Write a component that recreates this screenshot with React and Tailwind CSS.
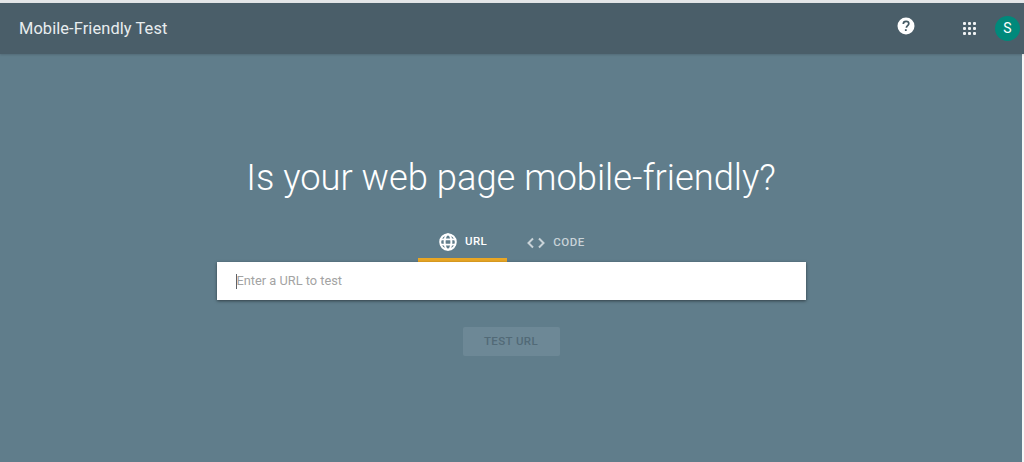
import React from 'react';

function GlobeIcon() {
    return (
        <svg width="18" height="18" viewBox="0 0 24 24" fill="none" stroke="#fff" strokeWidth="2.6">
            <circle cx="12" cy="12" r="10.4" />
            <ellipse cx="12" cy="12" rx="4.5" ry="10.4" />
            <path d="M2 8.5h20M2 15.5h20" />
        </svg>
    );
}

function CodeIcon() {
    return (
        <svg width="18" height="12" viewBox="0 0 18 12" fill="none" stroke="#c9d3d8" strokeWidth="2">
            <path d="M6 1.5 1.5 6 6 10.5M12 1.5 16.5 6 12 10.5" />
        </svg>
    );
}

function HelpIcon() {
    return (
        <svg width="18" height="18" viewBox="0 0 18 18">
            <circle cx="9" cy="9" r="8.5" fill="#fff" />
            <path d="M6.3 7c0-1.6 1.2-2.6 2.8-2.6 1.5 0 2.7 1 2.7 2.3 0 1.9-2.4 2-2.4 4" fill="none" stroke="#455a64" strokeWidth="1.7" />
            <rect x="7.9" y="12.2" width="1.8" height="1.8" fill="#455a64" />
        </svg>
    );
}

function AppsIcon() {
    return (
        <div className="grid grid-cols-3 gap-[2px]">
            {[...Array(9)].map((_, i) => (
                <span key={i} className="w-[3px] h-[3px] bg-[#f1f3f4] rounded-[1px]"></span>
            ))}
        </div>
    );
}

export default function App() {
    return (
        <div className="w-[1024px] h-[462px] overflow-hidden flex flex-col bg-[#f4f6f7] font-['Roboto',sans-serif]">
            <div className="h-[3px] bg-[#e4e6e8]"></div>
            <header className="h-[51px] shrink-0 bg-[#4a5e69] flex items-center pl-[19px] shadow-[0_1px_2px_rgba(0,0,0,0.15)] z-10">
                <span className="pt-[2px] text-[16.4px] text-[#e8edef] tracking-[0.1px]">Mobile-Friendly Test</span>
                <div className="ml-auto flex items-center pr-[4px]">
                    <span className="-mt-[5px]"><HelpIcon /></span>
                    <span className="ml-[48px]"><AppsIcon /></span>
                    <span className="ml-[19px] w-[25px] h-[25px] rounded-full bg-[#00897b] text-white text-[14px] flex items-center justify-center">S</span>
                </div>
            </header>
            <main className="w-[1022px] flex-1 bg-[#607d8b] flex flex-col items-center">
                <h1 className="mt-[101px] h-[46px] text-[36.35px] leading-[46px] font-light text-white">Is your web page mobile-friendly?</h1>
                <div className="mt-[23px] w-[589px] flex flex-col items-center">
                    <div className="flex h-[38px] ml-[-1px]">
                        <div className="w-[89px] border-b-[4px] border-[#eaa724] flex items-center justify-center gap-[8px] pt-[2px] pl-[1px]">
                            <GlobeIcon />
                            <span className="text-[11.5px] font-medium text-white tracking-[0.3px]">URL</span>
                        </div>
                        <div className="w-[96px] flex items-center justify-center gap-[8px] pl-[2px]">
                            <CodeIcon />
                            <span className="text-[11.5px] font-medium text-[#c9d3d8] tracking-[0.5px]">CODE</span>
                        </div>
                    </div>
                    <div className="w-[589px] h-[38px] bg-white shadow-[0_1px_3px_rgba(0,0,0,0.5)] flex items-center pl-[19px]">
                        <span className="w-px h-[15px] bg-[#5f6368]"></span>
                        <span className="text-[12.8px] text-[#a3a3a3]">Enter a URL to test</span>
                    </div>
                    <button className="mt-[27px] w-[97px] h-[29px] rounded-[2px] bg-[#6d8896] text-[11.5px] font-medium text-[#526a77] tracking-[0.4px]">TEST URL</button>
                </div>
            </main>
        </div>
    );
}
